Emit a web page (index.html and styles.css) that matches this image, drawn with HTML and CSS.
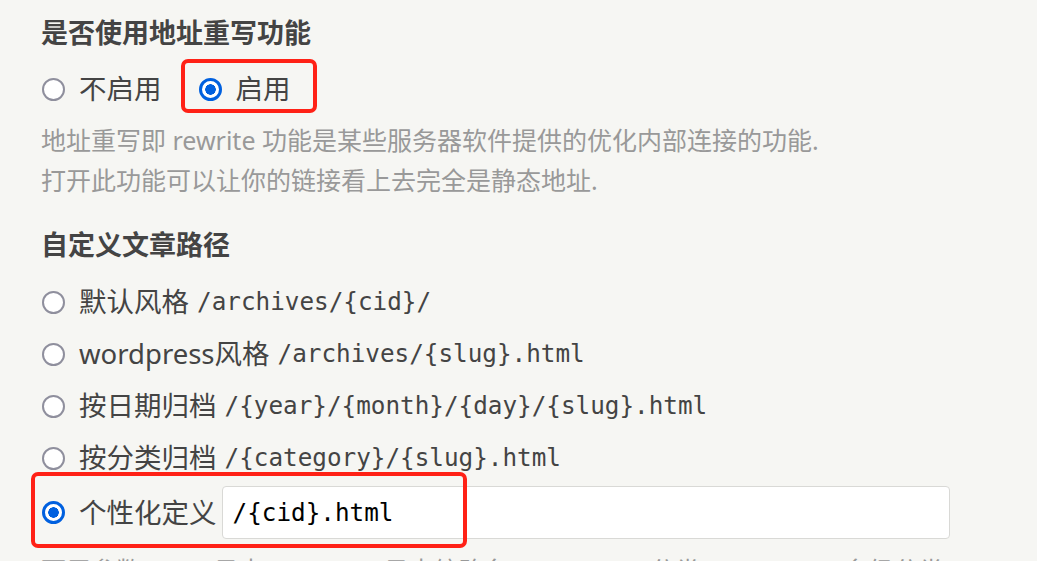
FILE: index.html
```html
<!DOCTYPE html>
<html lang="zh-CN">
<head>
    <meta charset="UTF-8">
    <meta name="viewport" content="width=device-width, initial-scale=1.0">
    <title>永久链接设置</title>
    <link rel="stylesheet" href="styles.css">
</head>
<body>
    <form class="settings">
        <h3 class="title">是否使用地址重写功能</h3>
        <div class="choices">
            <label class="choice"><input type="radio" name="rewrite" value="0"> 不启用</label>
            <label class="choice marked"><input type="radio" name="rewrite" value="1" checked> 启用</label>
        </div>
        <p class="desc">地址重写即 rewrite 功能是某些服务器软件提供的优化内部连接的功能.<br>打开此功能可以让你的链接看上去完全是静态地址.</p>

        <h3 class="title second">自定义文章路径</h3>
        <ul class="paths">
            <li><label class="choice"><input type="radio" name="postPattern"> 默认风格 <code>/archives/{cid}/</code></label></li>
            <li><label class="choice"><input type="radio" name="postPattern"> wordpress风格 <code>/archives/{slug}.html</code></label></li>
            <li><label class="choice"><input type="radio" name="postPattern"> 按日期归档 <code>/{year}/{month}/{day}/{slug}.html</code></label></li>
            <li><label class="choice"><input type="radio" name="postPattern"> 按分类归档 <code>/{category}/{slug}.html</code></label></li>
            <li class="custom marked">
                <label class="choice"><input type="radio" name="postPattern" checked> 个性化定义</label>
                <input type="text" class="pattern" name="customPattern" value="/{cid}.html">
            </li>
        </ul>
        <p class="desc">可用参数: {cid} 日志 ID, {slug} 日志缩略名, {category} 分类, {directory} 多级分类</p>
    </form>
</body>
</html>
```

FILE: styles.css
```css
body {
    margin: 0;
    background: #f6f6f3;
    font-family: "Noto Sans", "Noto Sans CJK SC", sans-serif;
    color: #444;
    overflow: hidden;
}

.settings {
    padding-left: 41px;
}

.title {
    margin: 13px 0 0;
    font-size: 27px;
    line-height: 40px;
    font-weight: bold;
    color: #444;
}

.title.second {
    margin-top: 25px;
}

.choices {
    display: flex;
    gap: 36px;
    margin-top: 16px;
}

.choice {
    display: flex;
    align-items: center;
    gap: 14px;
    font-size: 27.5px;
    line-height: 40px;
    white-space: nowrap;
}

.choice input[type="radio"] {
    appearance: none;
    margin: 0 0 0 1px;
    width: 23px;
    height: 23px;
    border: 2.5px solid #8f8f9d;
    border-radius: 50%;
    background: #fff;
    flex-shrink: 0;
}

.choice input[type="radio"]:checked {
    border: 3px solid #0060df;
    background: radial-gradient(circle, #0060df 0 5px, #fff 5.5px);
}

code {
    font-family: "DejaVu Sans Mono", monospace;
    font-size: 24.3px;
    color: #444;
    margin-left: -6px;
}

.desc {
    margin: 11px 0 0;
    font-size: 25px;
    line-height: 40px;
    color: #999;
    white-space: nowrap;
}

.paths {
    list-style: none;
    margin: 17px 0 0;
    padding: 0;
}

.paths li {
    margin-bottom: 12px;
}

.paths li.custom {
    display: flex;
    align-items: center;
    gap: 5px;
    margin-top: -4px;
    margin-bottom: 0;
}

.pattern {
    width: 728px;
    height: 53px;
    box-sizing: border-box;
    padding: 0 10px;
    border: 1px solid #d9d9d6;
    border-radius: 4px;
    background: #fff;
    font-family: "DejaVu Sans Mono", monospace;
    font-size: 24.3px;
    color: #000;
}

/* red annotation frames */
.marked {
    position: relative;
}

.marked::after {
    content: "";
    position: absolute;
    border: 4px solid #ff2116;
    border-radius: 7px;
    pointer-events: none;
}

.choices .marked::after {
    left: -17px;
    right: -26px;
    top: -10px;
    bottom: -4px;
}

.paths .marked::after {
    left: -10px;
    width: 436px;
    top: -14px;
    bottom: -9px;
    box-sizing: border-box;
}
```
